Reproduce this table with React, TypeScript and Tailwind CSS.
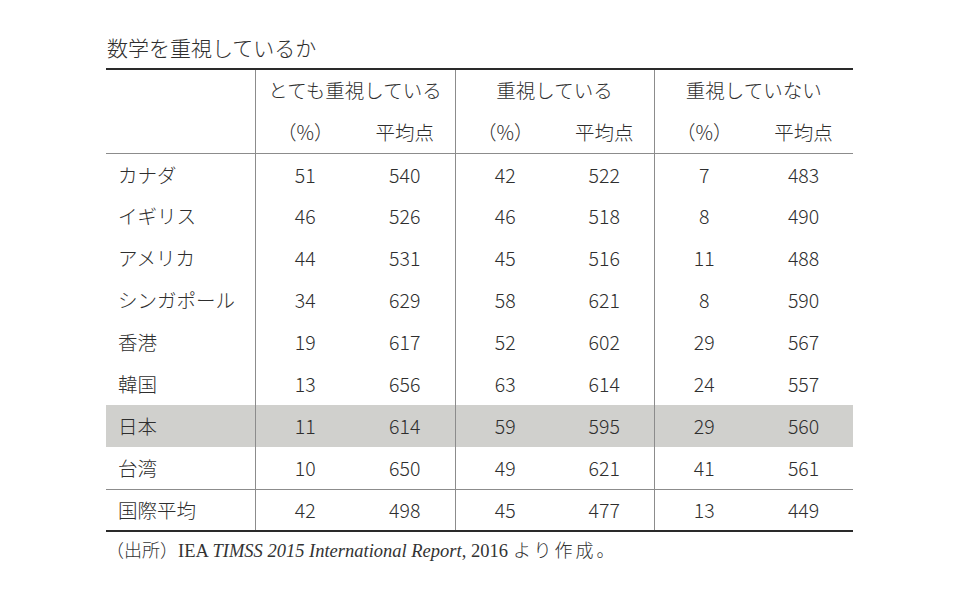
import React from "react";

const rows: [string, number, number, number, number, number, number][] = [
  ["カナダ", 51, 540, 42, 522, 7, 483],
  ["イギリス", 46, 526, 46, 518, 8, 490],
  ["アメリカ", 44, 531, 45, 516, 11, 488],
  ["シンガポール", 34, 629, 58, 621, 8, 590],
  ["香港", 19, 617, 52, 602, 29, 567],
  ["韓国", 13, 656, 63, 614, 24, 557],
  ["日本", 11, 614, 59, 595, 29, 560],
  ["台湾", 10, 650, 49, 621, 41, 561],
];
const avg: [string, number, number, number, number, number, number] = ["国際平均", 42, 498, 45, 477, 13, 449];

function Row({ r, hl, top }: { r: (string | number)[]; hl?: boolean; top?: boolean }) {
  const base = `h-[42px] p-0 pt-[0px] text-center align-middle ${hl ? "bg-[#d0d0cd]" : ""} ${top ? "border-t border-[#8c8c8c]" : ""}`;
  return (
    <tr>
      <td className={`${base} text-left pl-[12px]`}>{r[0]}</td>
      <td className={`${base} border-l border-l-[#8c8c8c]`}>{r[1]}</td>
      <td className={base}>{r[2]}</td>
      <td className={`${base} border-l border-l-[#8c8c8c]`}>{r[3]}</td>
      <td className={base}>{r[4]}</td>
      <td className={`${base} border-l border-l-[#8c8c8c]`}>{r[5]}</td>
      <td className={base}>{r[6]}</td>
    </tr>
  );
}

const latin = { fontFamily: '"Liberation Serif", serif' };

export default function App() {
  return (
    <div
      className="w-[970px] h-[600px] bg-white pl-[106px] pt-[32px] text-[#2e2e2e]"
      style={{ fontFamily: '"Noto Sans CJK JP", "Noto Sans", sans-serif' }}
    >
      <div className="text-[21px] leading-[30px] pl-[1px] font-light">数学を重視しているか</div>
      <table className="mt-[6px] w-[747px] table-fixed border-collapse text-[19.5px] font-light border-t-2 border-b-2 border-[#2a2a2a]">
        <colgroup>
          <col className="w-[149px]" />
          <col className="w-[100px]" />
          <col className="w-[100px]" />
          <col className="w-[100px]" />
          <col className="w-[99px]" />
          <col className="w-[100px]" />
          <col className="w-[99px]" />
        </colgroup>
        <tbody>
          <tr>
            <td rowSpan={2} className="p-0"></td>
            <td colSpan={2} className="h-[42px] p-0 pb-[2px] text-center align-middle border-l border-l-[#8c8c8c]">とても重視している</td>
            <td colSpan={2} className="h-[42px] p-0 pb-[2px] text-center align-middle border-l border-l-[#8c8c8c]">重視している</td>
            <td colSpan={2} className="h-[42px] p-0 pb-[2px] text-center align-middle border-l border-l-[#8c8c8c]">重視していない</td>
          </tr>
          <tr>
            <td className="h-[42px] p-0 pt-[0px] text-center align-middle border-l border-l-[#8c8c8c]">（%）</td>
            <td className="h-[42px] p-0 pt-[0px] text-center align-middle">平均点</td>
            <td className="h-[42px] p-0 pt-[0px] text-center align-middle border-l border-l-[#8c8c8c]">（%）</td>
            <td className="h-[42px] p-0 pt-[0px] text-center align-middle">平均点</td>
            <td className="h-[42px] p-0 pt-[0px] text-center align-middle border-l border-l-[#8c8c8c]">（%）</td>
            <td className="h-[42px] p-0 pt-[0px] text-center align-middle">平均点</td>
          </tr>
          {rows.map((r, i) => (
            <Row key={r[0]} r={r} hl={r[0] === "日本"} top={i === 0} />
          ))}
          <Row r={avg} top />
        </tbody>
      </table>
      <div className="mt-[4px] text-[18px] leading-[26px] text-[#333] font-light">
        （出所）
        <span className="text-[18.5px] font-normal" style={latin}>
          IEA <span className="italic">TIMSS 2015 International Report</span>, 2016
        </span>
        <span className="ml-[5px] tracking-[3px]">より作成。</span>
      </div>
    </div>
  );
}
